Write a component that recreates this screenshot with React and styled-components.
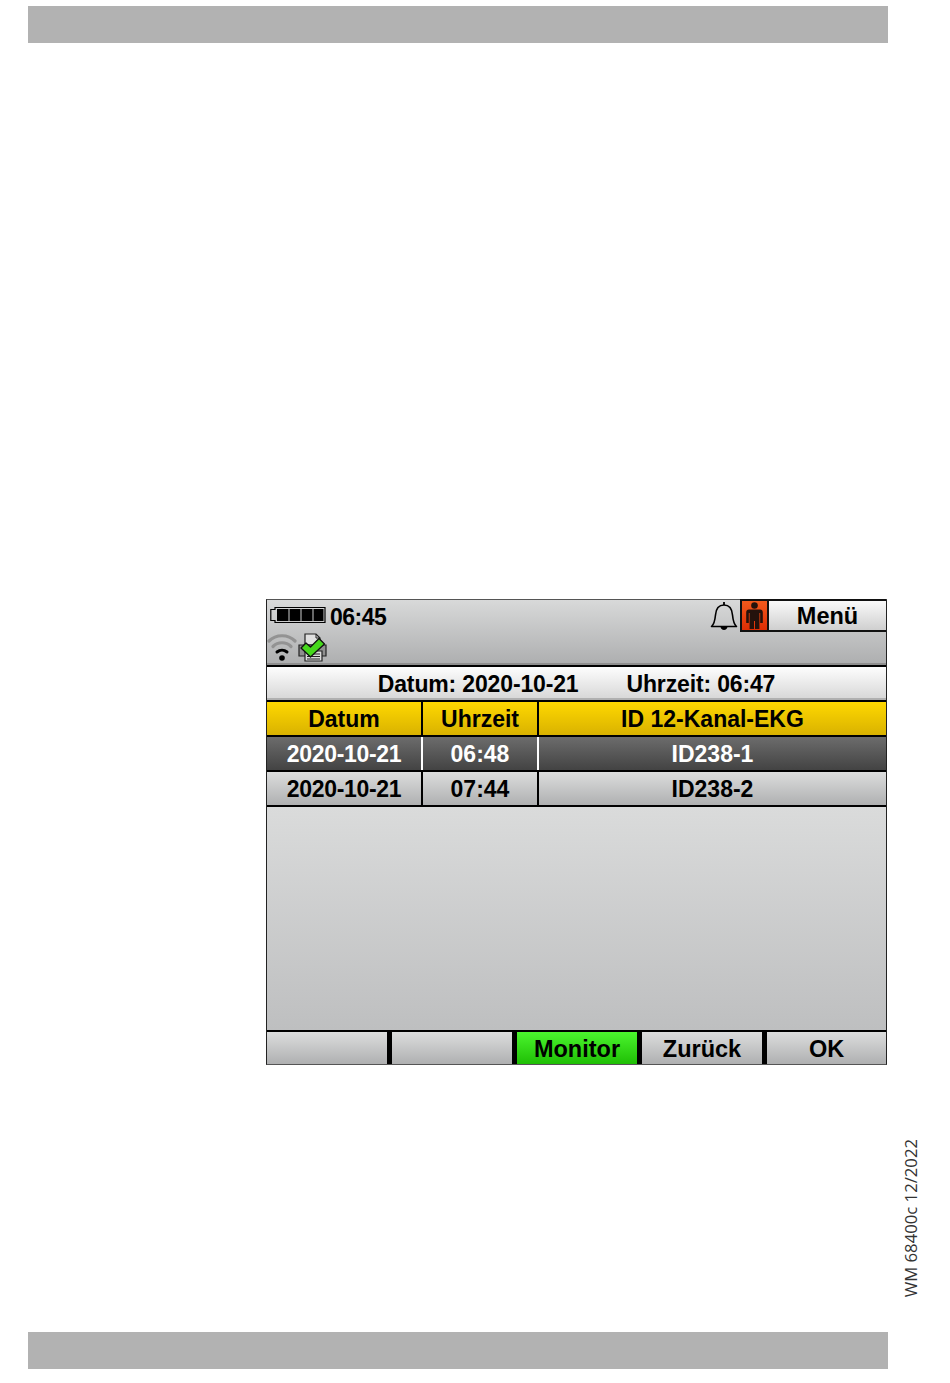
import React from 'react';
import styled, { createGlobalStyle, css } from 'styled-components';

const GlobalStyle = createGlobalStyle`
    html, body {
        margin: 0;
        padding: 0;
        background: #fff;
    }
`;

const Page = styled.div`
    box-sizing: border-box;
    width: 950px;
    height: 1383px;
    padding: 6px 0 14px 28px;
    display: flex;
    flex-direction: column;
    overflow: hidden;
`;

const Bar = styled.div`
    flex: none;
    width: 860px;
    height: 37px;
    background: #b2b2b2;
`;

const Middle = styled.div`
    flex: 1;
    display: flex;
    align-items: flex-start;
    padding: 556px 0 0 238px;
`;

const DocCode = styled.div`
    align-self: flex-end;
    margin: 0 0 35px 15px;
    writing-mode: vertical-rl;
    transform: rotate(180deg);
    font-family: "Open Sans", sans-serif;
    font-size: 16.7px;
    line-height: 18px;
    color: #333;
    white-space: nowrap;
`;

const Device = styled.div`
    box-sizing: border-box;
    flex: none;
    width: 621px;
    height: 466px;
    display: flex;
    flex-direction: column;
    border: 1px solid #222;
    border-top-color: #555;
    border-bottom-color: #555;
    font-family: "Liberation Sans", Arial, sans-serif;
    font-weight: 700;
    font-size: 23px;
    color: #000;
`;

const Status = styled.div`
    box-sizing: border-box;
    flex: none;
    height: 67px;
    display: flex;
    flex-direction: column;
    background: linear-gradient(#d8d9d9, #adaeaf);
    border-bottom: 2px solid #000;
    box-shadow: inset 0 -2px 0 #8e8e8e;
`;

const StatusTop = styled.div`
    height: 32px;
    display: flex;
    align-items: flex-start;
`;

const Clock = styled.span`
    margin: 3px 0 0 4px;
    letter-spacing: -0.5px;
    line-height: 28px;
`;

const Battery = styled.svg`
    margin: 6px 0 0 3px;
`;

const Right = styled.div`
    margin-left: auto;
    display: flex;
    align-items: flex-start;
`;

const Bell = styled.svg`
    margin: 1px 2px 0 0;
`;

const Person = styled.div`
    box-sizing: border-box;
    width: 29px;
    height: 33px;
    margin-top: -1px;
    display: flex;
    align-items: center;
    justify-content: center;
    background: linear-gradient(#f25a1c, #dc2d04);
    border: 2px solid #111;
`;

const MenuButton = styled.div`
    box-sizing: border-box;
    width: 117px;
    height: 33px;
    margin-top: -1px;
    display: flex;
    align-items: center;
    justify-content: center;
    padding-top: 1px;
    font-size: 23.5px;
    background: linear-gradient(#fafafa, #cfcfcf);
    border-top: 2px solid #111;
    border-bottom: 2px solid #111;
`;

const StatusIcons = styled.div`
    display: flex;
    align-items: flex-start;
    gap: 1px;
`;

const DateRow = styled.div`
    box-sizing: border-box;
    flex: none;
    height: 35px;
    display: flex;
    justify-content: center;
    align-items: center;
    gap: 48px;
    padding-top: 1px;
    letter-spacing: -0.15px;
    background: linear-gradient(#fdfdfd, #d6d6d6);
    border-bottom: 2px solid #000;
    box-shadow: inset 0 -2px 0 #b0b0b0;
`;

const variants = {
    head: css`
        background: linear-gradient(#ffd800, #d9b200);
        color: #000;
    `,
    active: css`
        background: linear-gradient(#6c6c6c, #434343);
        color: #fff;
    `,
    normal: css`
        background: linear-gradient(#dcdddd, #afb0b1);
        color: #000;
    `
};

const Row = styled.div`
    box-sizing: border-box;
    flex: none;
    height: 35px;
    display: grid;
    grid-template-columns: 154px 116px 1fr;
    border-bottom: 2px solid #000;
    ${props => variants[props.$kind]}
`;

const Cell = styled.div`
    display: flex;
    align-items: center;
    justify-content: center;
    padding-top: 1px;
    &:not(:first-child) {
        border-left: 2px solid ${props => (props.$kind === 'active' ? '#fff' : '#000')};
    }
`;

const DateValue = styled.span`
    letter-spacing: -0.3px;
`;

const Empty = styled.div`
    flex: 1;
    background: linear-gradient(#dadbdb, #bebfc0);
    border-bottom: 2px solid #000;
`;

const Toolbar = styled.div`
    flex: none;
    height: 32px;
    display: grid;
    grid-template-columns: 120px repeat(3, 125px) 1fr;
`;

const SoftKey = styled.div`
    display: flex;
    align-items: center;
    justify-content: center;
    padding-top: 2px;
    font-size: 23.5px;
    background: ${props =>
        props.$green ? 'linear-gradient(#4bf52e, #1fbf05)' : 'linear-gradient(#dcdddd, #afb0b1)'};
    &:not(:first-child) {
        border-left: 5px solid #000;
    }
`;

const BatteryIcon = () => (
    <Battery width="56" height="18" viewBox="0 0 56 18">
        <path d="M5 1.500H55V16.500H5V14.500H0.800V3.500H5Z" fill="none" stroke="#000" strokeWidth="1.200" />
        <rect x="7" y="3" width="11.500" height="12" fill="#000" />
        <rect x="19.500" y="3" width="11" height="12" fill="#000" />
        <rect x="31.500" y="3" width="11" height="12" fill="#000" />
        <rect x="43.500" y="3" width="10" height="12" fill="#000" />
    </Battery>
);

const BellIcon = () => (
    <Bell width="28" height="30" viewBox="0 0 28 30">
        <path
            d="M1.500 25.500C4.500 23 5 19 5.500 14C6 7.500 9 4 14 4C19 4 22 7.500 22.500 14C23 19 23.500 23 26.500 25.500Z"
            fill="none"
            stroke="#000"
            strokeWidth="1.600"
            strokeLinejoin="round"
        />
        <path d="M14 1V4" stroke="#000" strokeWidth="1.800" />
        <path d="M10.500 25.500H17.500C17.500 30 10.500 30 10.500 25.500Z" fill="#000" />
    </Bell>
);

const PersonIcon = () => (
    <svg width="17" height="27" viewBox="0 0 17 27">
        <circle cx="8.500" cy="3.500" r="3.300" fill="#24120c" />
        <path
            d="M3 7.500H14C15.800 7.500 16.800 8.700 16.800 10.500V21H14.200V11H13.400V27H9V19H8V27H3.600V11H2.800V21H0.200V10.500C0.200 8.700 1.200 7.500 3 7.500Z"
            fill="#24120c"
        />
    </svg>
);

const WifiIcon = () => (
    <svg width="30" height="30" viewBox="0 0 30 30" fill="none" strokeLinecap="round">
        <path d="M2 9C9 2 21 2 28 9" stroke="#939393" strokeWidth="3.200" />
        <path d="M6 14.500C11 9.500 19 9.500 24 14.500" stroke="#939393" strokeWidth="3.200" />
        <path d="M10 20C13 17.500 17 17.500 20 20" stroke="#000" strokeWidth="3" />
        <circle cx="15" cy="26" r="2.800" fill="#000" />
    </svg>
);

const PrinterIcon = () => (
    <svg width="30" height="30" viewBox="0 0 30 30">
        <path d="M7 2H18L22 6V13H7Z" fill="#e0e0e0" stroke="#222" strokeWidth="1.200" />
        <path d="M18 2V6H22" fill="none" stroke="#222" strokeWidth="1" />
        <path d="M1 13H28V24H1Z" fill="#8f8f8f" stroke="#222" strokeWidth="1.200" />
        <path d="M7 19H24V29H7Z" fill="#dcdcdc" stroke="#222" strokeWidth="1.200" />
        <path d="M9 22H22M9 24.500H22M9 27H22" stroke="#222" strokeWidth="1" />
        <path
            d="M3 16L8 11L12.500 15L21 6.500L26.500 12L12.500 25Z"
            fill="#46d81c"
            stroke="#111"
            strokeWidth="1.300"
            strokeLinejoin="round"
        />
    </svg>
);

const entries = [
    { date: '2020-10-21', time: '06:48', id: 'ID238-1', kind: 'active' },
    { date: '2020-10-21', time: '07:44', id: 'ID238-2', kind: 'normal' }
];

const softKeys = [
    { label: '' },
    { label: '' },
    { label: 'Monitor', green: true },
    { label: 'Zurück' },
    { label: 'OK' }
];

const App = () => {
    return (
        <Page>
            <GlobalStyle />
            <Bar />
            <Middle>
                <Device>
                    <Status>
                        <StatusTop>
                            <BatteryIcon />
                            <Clock>06:45</Clock>
                            <Right>
                                <BellIcon />
                                <Person>
                                    <PersonIcon />
                                </Person>
                                <MenuButton>Menü</MenuButton>
                            </Right>
                        </StatusTop>
                        <StatusIcons>
                            <WifiIcon />
                            <PrinterIcon />
                        </StatusIcons>
                    </Status>
                    <DateRow>
                        <span>Datum: 2020-10-21</span>
                        <span>Uhrzeit: 06:47</span>
                    </DateRow>
                    <Row $kind="head">
                        <Cell>Datum</Cell>
                        <Cell>Uhrzeit</Cell>
                        <Cell>ID 12-Kanal-EKG</Cell>
                    </Row>
                    {entries.map(entry => (
                        <Row key={entry.id} $kind={entry.kind}>
                            <Cell $kind={entry.kind}>
                                <DateValue>{entry.date}</DateValue>
                            </Cell>
                            <Cell $kind={entry.kind}>{entry.time}</Cell>
                            <Cell $kind={entry.kind}>{entry.id}</Cell>
                        </Row>
                    ))}
                    <Empty />
                    <Toolbar>
                        {softKeys.map((key, i) => (
                            <SoftKey key={i} $green={key.green}>
                                {key.label}
                            </SoftKey>
                        ))}
                    </Toolbar>
                </Device>
                <DocCode>WM 68400c 12/2022</DocCode>
            </Middle>
            <Bar />
        </Page>
    );
};

export default App;
